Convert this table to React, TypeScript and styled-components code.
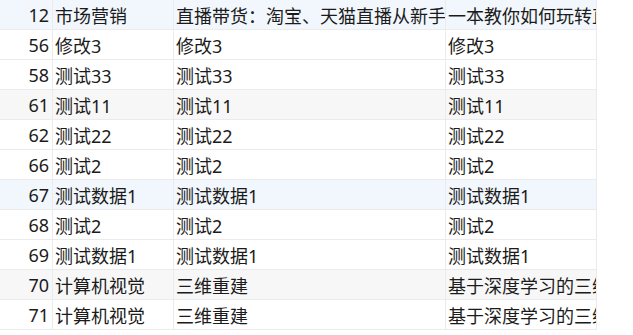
import React from 'react';
import styled, { createGlobalStyle } from 'styled-components';

const GlobalStyle = createGlobalStyle`
  html, body {
    margin: 0;
    padding: 0;
    background: #ffffff;
  }
  body {
    font-family: "Noto Sans", "Noto Sans CJK SC", sans-serif;
  }
`;

const Page = styled.div`
  width: 633px;
  height: 335px;
  overflow: hidden;
  background: #ffffff;
`;

const Table = styled.div`
  display: grid;
  grid-template-columns: 53px 121px 272px 151px;
  width: 597px;
`;

type Tone = 'plain' | 'blue' | 'gray';

const toneColor: Record<Tone, string> = {
  plain: '#ffffff',
  blue: '#f2f7fd',
  gray: '#f7f7f7',
};

const Cell = styled.div<{ $tone: Tone; $align?: 'left' | 'right' }>`
  box-sizing: border-box;
  height: 30px;
  display: flex;
  align-items: center;
  justify-content: ${(p) => (p.$align === 'right' ? 'flex-end' : 'flex-start')};
  padding: 0 ${(p) => (p.$align === 'right' ? '3px' : '0')} 0 ${(p) => (p.$align === 'right' ? '0' : '2px')};
  border-right: 1px solid #ebebeb;
  border-bottom: 1px solid #ebebeb;
  background: ${(p) => toneColor[p.$tone]};
  color: #1b1b1b;
  font-size: 18px;
  white-space: nowrap;
  overflow: hidden;
`;

type Row = { id: number; name: string; title: string; desc: string; tone: Tone };

const rows: Row[] = [
  { id: 12, name: '市场营销', title: '直播带货：淘宝、天猫直播从新手', desc: '一本教你如何玩转直播带货', tone: 'blue' },
  { id: 56, name: '修改3', title: '修改3', desc: '修改3', tone: 'plain' },
  { id: 58, name: '测试33', title: '测试33', desc: '测试33', tone: 'plain' },
  { id: 61, name: '测试11', title: '测试11', desc: '测试11', tone: 'gray' },
  { id: 62, name: '测试22', title: '测试22', desc: '测试22', tone: 'plain' },
  { id: 66, name: '测试2', title: '测试2', desc: '测试2', tone: 'plain' },
  { id: 67, name: '测试数据1', title: '测试数据1', desc: '测试数据1', tone: 'blue' },
  { id: 68, name: '测试2', title: '测试2', desc: '测试2', tone: 'plain' },
  { id: 69, name: '测试数据1', title: '测试数据1', desc: '测试数据1', tone: 'plain' },
  { id: 70, name: '计算机视觉', title: '三维重建', desc: '基于深度学习的三维重建', tone: 'gray' },
  { id: 71, name: '计算机视觉', title: '三维重建', desc: '基于深度学习的三维重建', tone: 'plain' },
];

const App: React.FC = () => {
  return (
    <>
      <GlobalStyle />
      <Page>
        <Table>
          {rows.map((r) => (
            <React.Fragment key={r.id}>
              <Cell $tone={r.tone} $align="right">{r.id}</Cell>
              <Cell $tone={r.tone}>{r.name}</Cell>
              <Cell $tone={r.tone}>{r.title}</Cell>
              <Cell $tone={r.tone}>{r.desc}</Cell>
            </React.Fragment>
          ))}
        </Table>
      </Page>
    </>
  );
};

export default App;
